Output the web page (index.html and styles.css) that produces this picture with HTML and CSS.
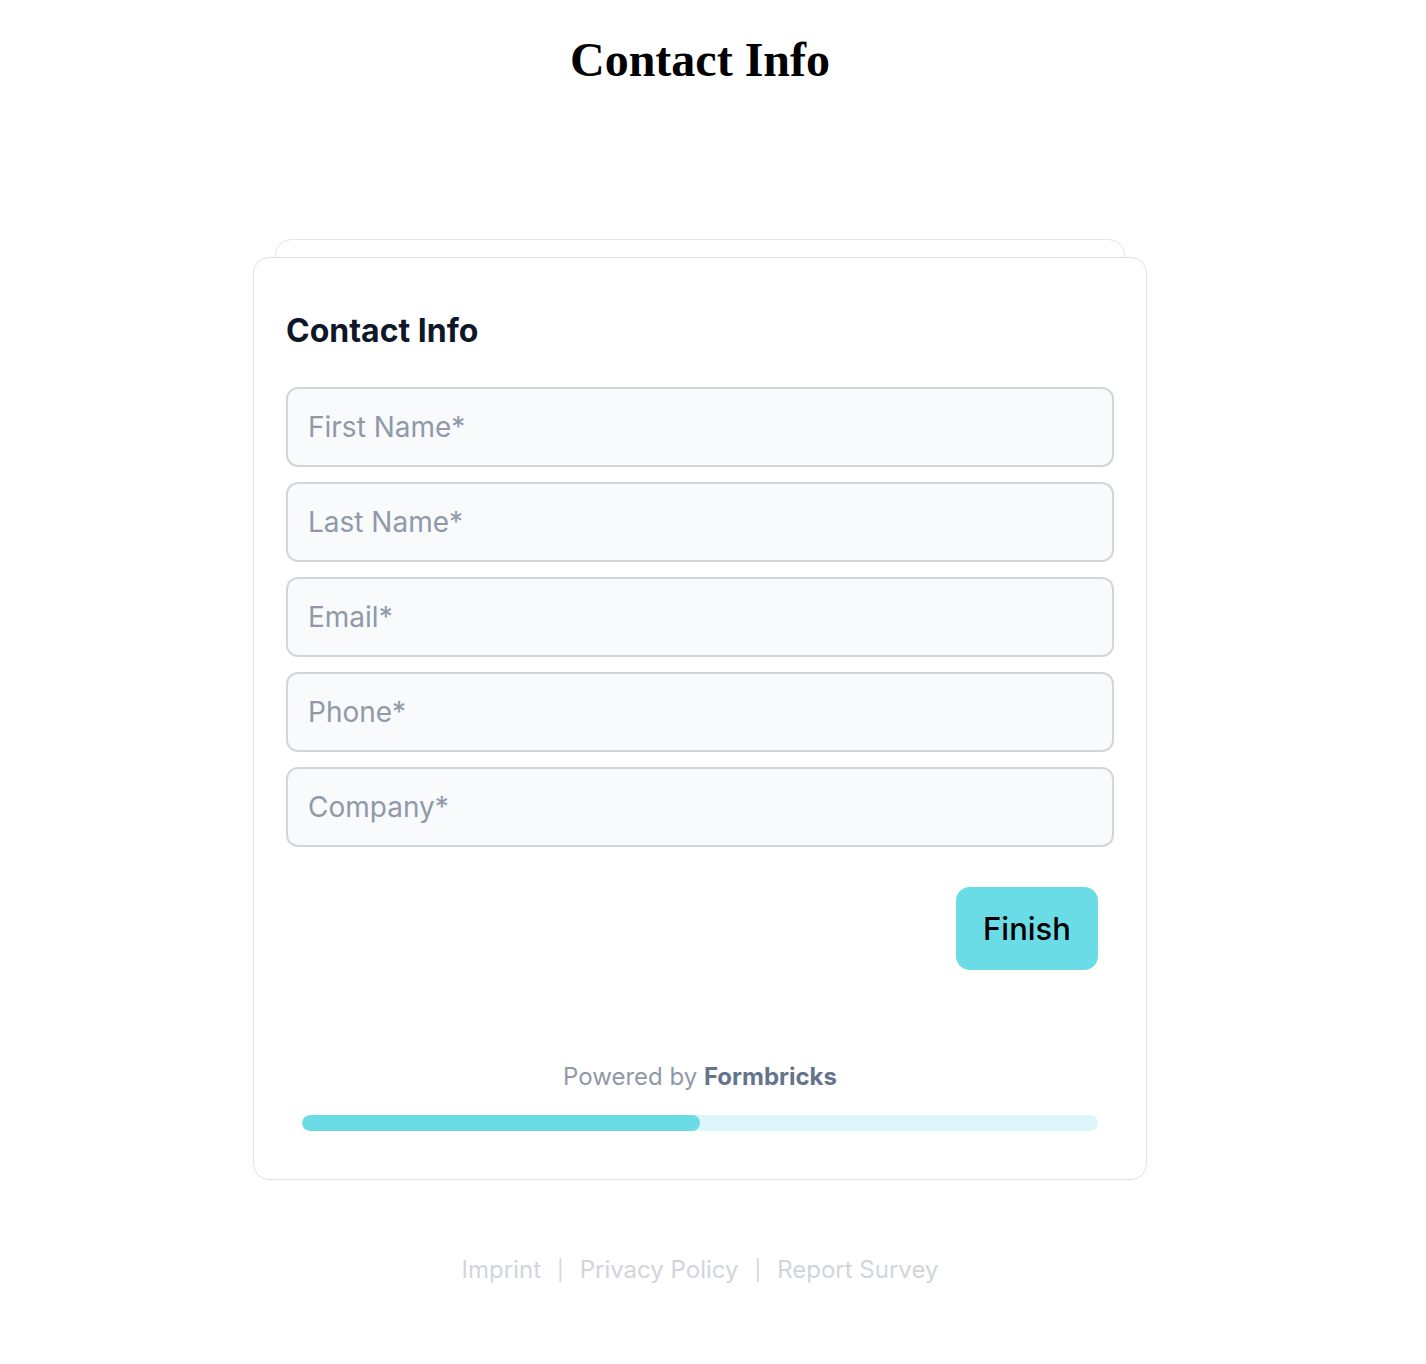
FILE: index.html
```html
<!DOCTYPE html>
<html lang="en">
<head>
    <meta charset="UTF-8">
    <meta name="viewport" content="width=device-width, initial-scale=1.0">
    <title>Contact Info</title>
    <link rel="stylesheet" href="styles.css">
</head>
<body>
    <div class="page">
        <h1 class="page-title">Contact Info</h1>

        <div class="survey">
            <div class="survey-card">
                <h2 class="question">Contact Info</h2>

                <form class="fields">
                    <input class="field" type="text" placeholder="First Name*">
                    <input class="field" type="text" placeholder="Last Name*">
                    <input class="field" type="email" placeholder="Email*">
                    <input class="field" type="tel" placeholder="Phone*">
                    <input class="field" type="text" placeholder="Company*">

                    <div class="actions">
                        <button class="finish-button" type="button">Finish</button>
                    </div>
                </form>

                <p class="powered">Powered by <strong>Formbricks</strong></p>

                <div class="progress">
                    <div class="progress-fill" style="width: 50%"></div>
                </div>
            </div>
        </div>

        <div class="footer-links">
            <a href="#">Imprint</a>
            <span class="sep">|</span>
            <a href="#">Privacy Policy</a>
            <span class="sep">|</span>
            <a href="#">Report Survey</a>
        </div>
    </div>
</body>
</html>
```

FILE: styles.css
```css
body {
    margin: 0;
    background-color: #fff;
}

.page {
    width: 1400px;
    padding-top: 32px;
}

.page-title {
    font-family: 'Liberation Serif', 'Times New Roman', serif;
    font-size: 48px;
    font-weight: bold;
    color: #000;
    text-align: center;
    margin: 0 0 170px;
    line-height: 55px;
}

.survey {
    position: relative;
    width: 894px;
    margin: 0 auto;
}

/* the second card peeking out behind */
.survey::before {
    content: '';
    position: absolute;
    top: -18px;
    left: 22px;
    right: 22px;
    height: 40px;
    border: 1px solid #e3e5e8;
    border-radius: 16px;
    background: #fff;
}

.survey-card {
    position: relative;
    box-sizing: border-box;
    background: #fff;
    border: 1px solid #e0e2e6;
    border-radius: 16px;
    padding: 55px 32px 48px;
    font-family: 'Inter', 'Noto Sans', sans-serif;
}

.question {
    font-size: 32px;
    font-weight: 700;
    line-height: 36px;
    color: #0f172a;
    margin: 0 0 38px;
}

.fields {
    display: flex;
    flex-direction: column;
    gap: 15px;
}

.field {
    box-sizing: border-box;
    width: 100%;
    height: 80px;
    border: 2px solid #d2d5da;
    border-radius: 12px;
    background: #f8fafc;
    padding: 0 20px;
    font-family: 'Inter', 'Noto Sans', sans-serif;
    font-size: 28px;
    color: #0f172a;
    outline: none;
}

.field::placeholder {
    color: #8f99a8;
}

.actions {
    display: flex;
    justify-content: flex-end;
    padding-right: 16px;
    margin-top: 25px;
}

.finish-button {
    width: 142px;
    height: 83px;
    border: none;
    border-radius: 14px;
    background: #6adce6;
    color: #000;
    font-family: 'Inter', 'Noto Sans', sans-serif;
    font-size: 31px;
    font-weight: 500;
    cursor: pointer;
}

.powered {
    text-align: center;
    font-size: 24px;
    line-height: 30px;
    color: #8f99a8;
    margin: 92px 0 23px;
}

.powered strong {
    color: #64748b;
    font-weight: 700;
}

.progress {
    height: 16px;
    margin: 0 16px;
    border-radius: 8px;
    background: #dcf6f9;
    overflow: hidden;
}

.progress-fill {
    height: 100%;
    border-radius: 8px;
    background: #6adce6;
}

.footer-links {
    display: flex;
    justify-content: center;
    gap: 16px;
    margin-top: 75px;
    font-family: 'Inter', 'Noto Sans', sans-serif;
    font-size: 24px;
    line-height: 30px;
    color: #d1d5db;
}

.footer-links a {
    color: #d1d5db;
    text-decoration: none;
}

.footer-links .sep {
    font-size: 20px;
}
```
